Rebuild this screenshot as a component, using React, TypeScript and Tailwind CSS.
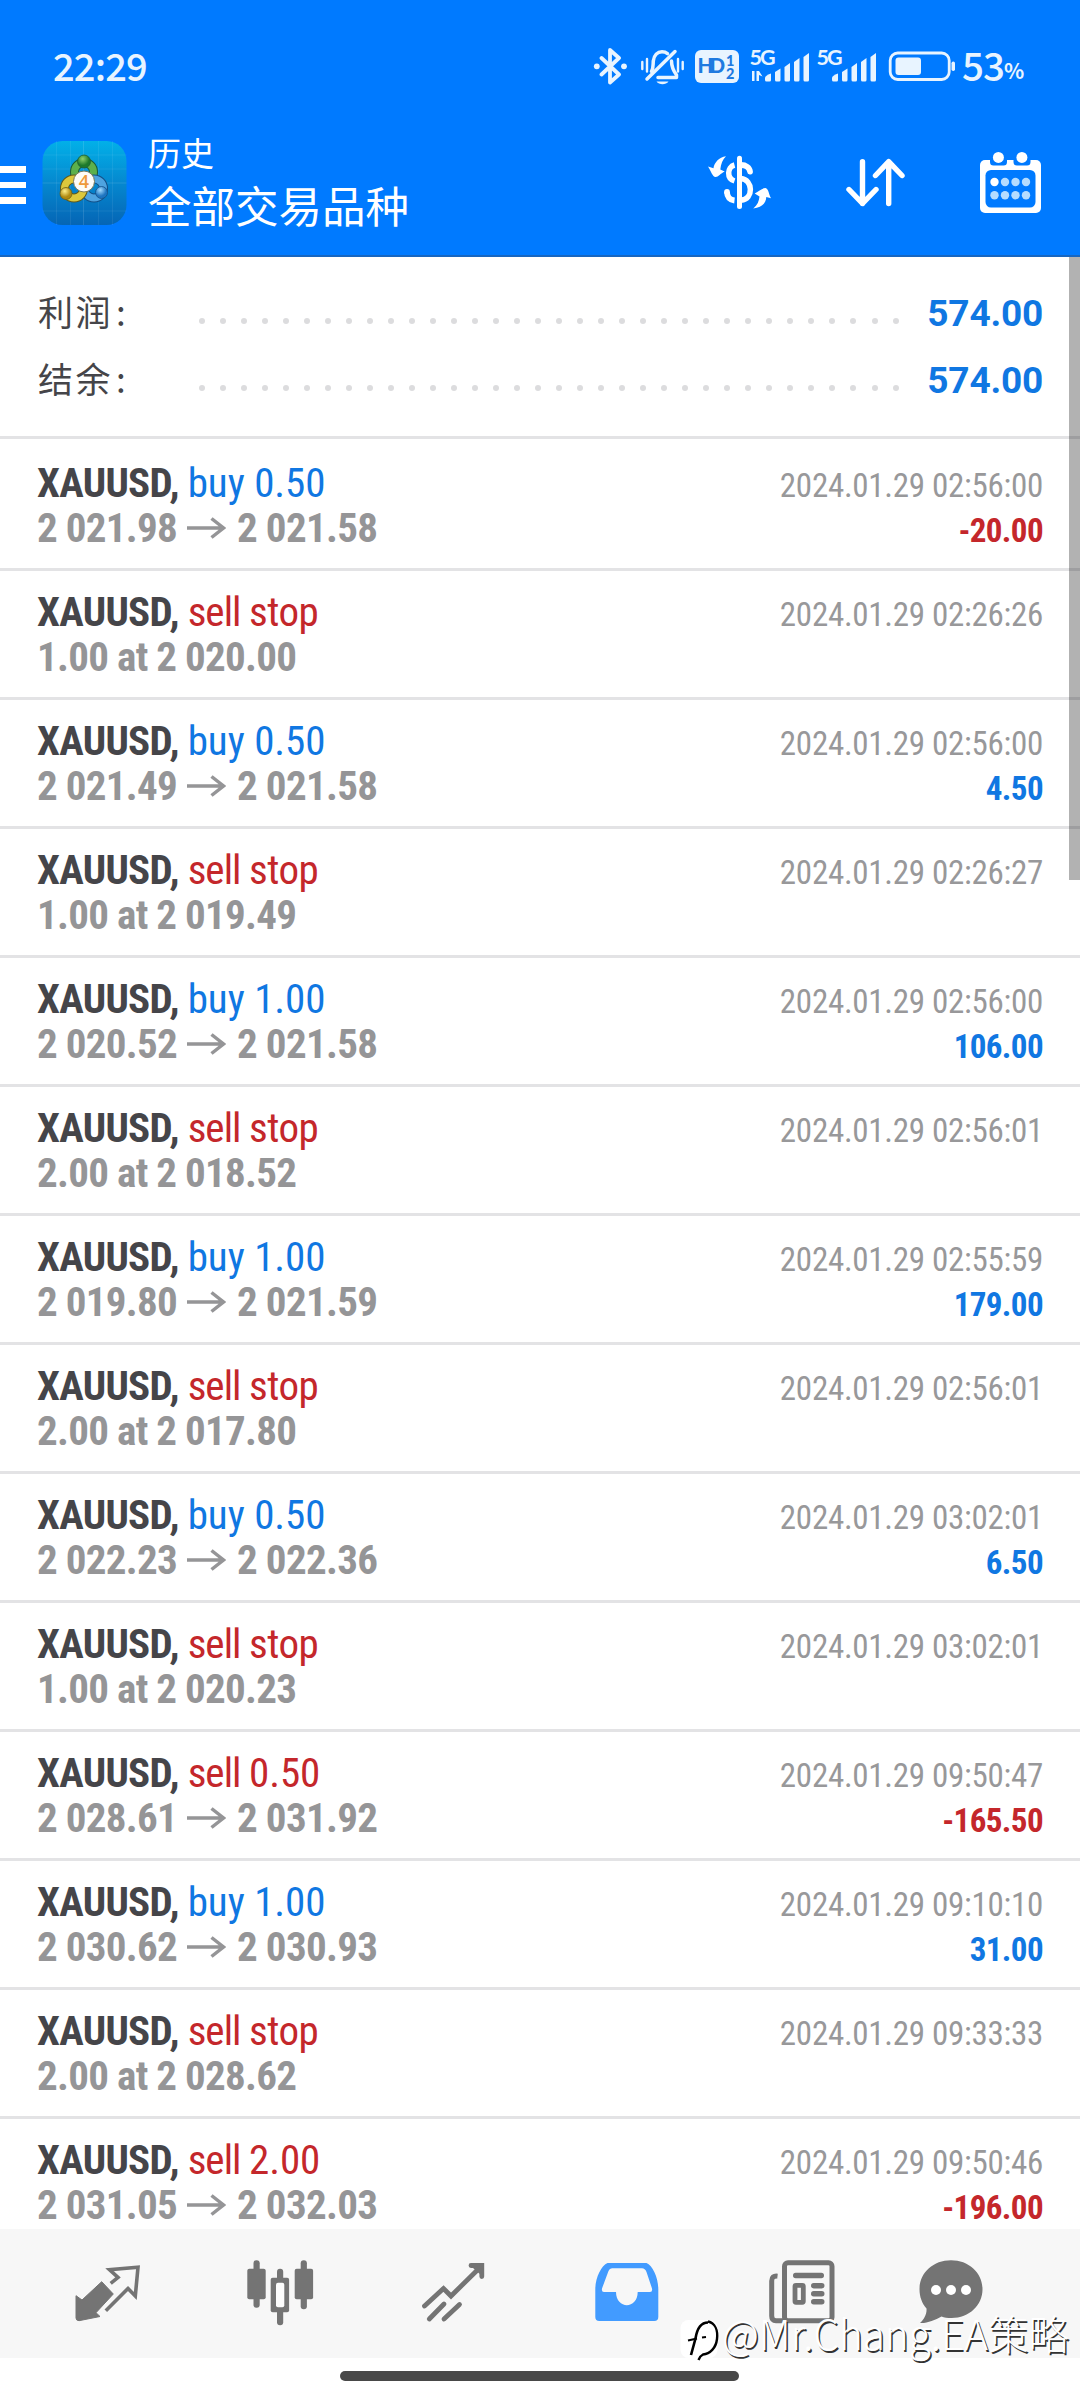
import type { ReactNode } from "react";
import { clsx } from "clsx";

interface Deal {
  side: "buy" | "sell";
  volume: string;
  detail: string;
  closePrice?: string;
  time: string;
  profit?: string;
}

const deals: Deal[] = [
  { side: "buy", volume: "0.50", detail: "2 021.98", closePrice: "2 021.58", time: "2024.01.29 02:56:00", profit: "-20.00" },
  { side: "sell", volume: "stop", detail: "1.00 at 2 020.00", time: "2024.01.29 02:26:26" },
  { side: "buy", volume: "0.50", detail: "2 021.49", closePrice: "2 021.58", time: "2024.01.29 02:56:00", profit: "4.50" },
  { side: "sell", volume: "stop", detail: "1.00 at 2 019.49", time: "2024.01.29 02:26:27" },
  { side: "buy", volume: "1.00", detail: "2 020.52", closePrice: "2 021.58", time: "2024.01.29 02:56:00", profit: "106.00" },
  { side: "sell", volume: "stop", detail: "2.00 at 2 018.52", time: "2024.01.29 02:56:01" },
  { side: "buy", volume: "1.00", detail: "2 019.80", closePrice: "2 021.59", time: "2024.01.29 02:55:59", profit: "179.00" },
  { side: "sell", volume: "stop", detail: "2.00 at 2 017.80", time: "2024.01.29 02:56:01" },
  { side: "buy", volume: "0.50", detail: "2 022.23", closePrice: "2 022.36", time: "2024.01.29 03:02:01", profit: "6.50" },
  { side: "sell", volume: "stop", detail: "1.00 at 2 020.23", time: "2024.01.29 03:02:01" },
  { side: "sell", volume: "0.50", detail: "2 028.61", closePrice: "2 031.92", time: "2024.01.29 09:50:47", profit: "-165.50" },
  { side: "buy", volume: "1.00", detail: "2 030.62", closePrice: "2 030.93", time: "2024.01.29 09:10:10", profit: "31.00" },
  { side: "sell", volume: "stop", detail: "2.00 at 2 028.62", time: "2024.01.29 09:33:33" },
  { side: "sell", volume: "2.00", detail: "2 031.05", closePrice: "2 032.03", time: "2024.01.29 09:50:46", profit: "-196.00" },
];

const summary = [
  { label: "利润", value: "574.00" },
  { label: "结余", value: "574.00" },
];

/* ---------- status bar ---------- */

function BluetoothIcon() {
  return (
    <svg className="h-[38px] w-[38px]" viewBox="0 0 38 38" fill="none" stroke="currentColor" strokeWidth="3.8" strokeLinecap="round" strokeLinejoin="round">
      <path d="M9.5 11 L27 27.5 L18 35.5 V3 L27 11 L9.5 27.5" />
      <circle cx="4.8" cy="19.3" r="2.9" fill="currentColor" stroke="none" />
      <circle cx="32" cy="19.3" r="2.9" fill="currentColor" stroke="none" />
    </svg>
  );
}

function MutedBellIcon() {
  return (
    <svg className="ml-[10px] h-[38px] w-[45px]" viewBox="0 0 45 38" fill="none" stroke="currentColor" strokeWidth="3.5" strokeLinecap="round" strokeLinejoin="round">
      <path d="M11.5 24.5 C13.5 21 13 18 13.3 14 C14 8 17.5 4.8 22 4.8 C24 4.8 26 5.4 27.5 6.6" />
      <path d="M31.5 14 C31.5 19.5 32.5 22.5 36.5 28 V30.5 H18" />
      <path d="M7 32 L35 4.5" />
      <path d="M16.5 34.5 H28.5 C26 38 19 38 16.5 34.5 Z" fill="currentColor" stroke="none" />
      <path d="M2.3 15 V22 M7 12 V24.5 M38 12 V24.5 M42.7 15 V22" strokeWidth="2.4" />
    </svg>
  );
}

function HdIcon() {
  return (
    <svg className="ml-[10px] h-[33px] w-[44px] font-['Lato',sans-serif] font-black" viewBox="0 0 44 33">
      <rect width="44" height="33" rx="6" fill="currentColor" />
      <text x="2.5" y="23.4" fontSize="20.5" textLength="27.5" fill="#1f7ae0">HD</text>
      <text x="31" y="15.5" fontSize="14.5" fill="#1f7ae0">1</text>
      <text x="31" y="29" fontSize="14.5" fill="#1f7ae0">2</text>
    </svg>
  );
}

function SignalIcon({ className, data }: { className: string; data?: boolean }) {
  return (
    <svg className={clsx("h-[38px] w-[63px] overflow-visible font-['Lato',sans-serif] font-bold", className)} viewBox="0 0 63 38" fill="currentColor">
      <text x="2.5" y="18.3" fontSize="21.5" textLength="26">5G</text>
      {data && (
        <path d="M1 27.5 L5 24 V34 H7.5 V24 H5 Z M9.5 24 V34 H12 V28 L15.5 29.5 L12 24 Z" />
      )}
      <path d="M18 31 q0 -2.5 6 -4.5 V33 q0 1.5 -1.5 1.5 H19.5 q-1.5 0 -1.5 -1.5 Z" />
      <path d="M28 25 L33.5 21.5 V33 q0 1.5 -1.5 1.5 H29.5 q-1.5 0 -1.5 -1.5 Z" />
      <path d="M37.5 20 L43 16 V33 q0 1.5 -1.5 1.5 H39 q-1.5 0 -1.5 -1.5 Z" />
      <path d="M47 15 L52.5 11 V33 q0 1.5 -1.5 1.5 H48.5 q-1.5 0 -1.5 -1.5 Z" />
      <path d="M56.5 10 L62 6 V33 q0 1.5 -1.5 1.5 H58 q-1.5 0 -1.5 -1.5 Z" />
    </svg>
  );
}

function BatteryIcon() {
  return (
    <svg className="ml-[11px] h-[30px] w-[68px]" viewBox="0 0 68 30" fill="currentColor">
      <rect x="2.2" y="2" width="59" height="26.5" rx="7.5" fill="none" stroke="currentColor" strokeWidth="2.8" />
      <rect x="7.5" y="6.5" width="25.5" height="17.5" rx="3" />
      <rect x="63.5" y="10.5" width="3.5" height="9.5" rx="1.7" />
    </svg>
  );
}

function StatusBar() {
  return (
    <div className="flex h-[104px] items-center pt-[28px] pr-[57px] pl-[53px] text-[#e8f4ff] font-['Noto_Sans_CJK_SC',sans-serif]">
      <span className="-mt-[3px] text-[38px] leading-none font-medium tracking-[-0.8px]">22:29</span>
      <div className="ml-auto flex items-center">
        <BluetoothIcon />
        <MutedBellIcon />
        <HdIcon />
        <SignalIcon className="ml-[8px]" data />
        <SignalIcon className="ml-[4px]" />
        <BatteryIcon />
        <span className="-mt-[4px] ml-[6px] text-[38.5px] leading-none font-medium tracking-[-1px]">53</span>
        <span className="mt-[8px] w-[19px] text-[21px] leading-none font-bold">%</span>
      </div>
    </div>
  );
}

/* ---------- title bar ---------- */

function AppLogo() {
  return (
    <svg className="ml-[16px] h-[84px] w-[85px]" viewBox="0 0 84 84">
      <defs>
        <linearGradient id="logo-bg" x1="0" y1="0" x2="0" y2="1">
          <stop offset="0" stopColor="#02b0e8" />
          <stop offset="0.5" stopColor="#0588cf" />
          <stop offset="1" stopColor="#0565b5" />
        </linearGradient>
        <radialGradient id="logo-green" cx="0.4" cy="0.3">
          <stop offset="0" stopColor="#8fd06a" />
          <stop offset="1" stopColor="#1d7a2c" />
        </radialGradient>
        <radialGradient id="logo-yellow" cx="0.4" cy="0.3">
          <stop offset="0" stopColor="#fff08a" />
          <stop offset="1" stopColor="#b08a10" />
        </radialGradient>
        <radialGradient id="logo-blue" cx="0.4" cy="0.3">
          <stop offset="0" stopColor="#a5dcff" />
          <stop offset="1" stopColor="#1d74c0" />
        </radialGradient>
      </defs>
      <rect width="84" height="84" rx="20" fill="url(#logo-bg)" />
      <path d="M14 0 V84 M28 0 V84 M56 0 V84 M70 0 V84 M0 14 H84 M0 28 H84 M0 70 H84" stroke="#fff" strokeOpacity="0.07" />
      <path d="M41 0 V84 M0 42 H84" stroke="#fff" strokeOpacity="0.12" />
      <g fill="none">
        <circle cx="41.5" cy="31" r="9.5" stroke="#1c5c33" strokeWidth="9" />
        <circle cx="41.5" cy="31" r="9.5" stroke="#5cb04c" strokeWidth="7" />
        <circle cx="51.5" cy="47.5" r="9.5" stroke="#134f86" strokeWidth="9" />
        <circle cx="51.5" cy="47.5" r="9.5" stroke="#4ea3e0" strokeWidth="7" />
        <circle cx="31.5" cy="47.5" r="9.5" stroke="#5f5a1c" strokeWidth="9" />
        <circle cx="31.5" cy="47.5" r="9.5" stroke="#dcc83c" strokeWidth="7" />
      </g>
      <circle cx="41.5" cy="20.5" r="6.5" fill="url(#logo-green)" stroke="#1c5c33" strokeWidth="0.8" />
      <circle cx="23.5" cy="52.5" r="6" fill="url(#logo-yellow)" stroke="#6f5f14" strokeWidth="0.8" />
      <circle cx="59" cy="51.5" r="6" fill="url(#logo-blue)" stroke="#134f86" strokeWidth="0.8" />
      <circle cx="41.5" cy="40.5" r="10.5" fill="#fdfcf8" stroke="#7a7a5a" strokeWidth="1" />
      <text x="41.5" y="47" textAnchor="middle" fontSize="18" fill="#ee9a3c" className="font-['Open_Sans',sans-serif] font-semibold">4</text>
    </svg>
  );
}

function CurrencyIcon() {
  return (
    <svg className="h-[56px] w-[66px]" viewBox="0 0 66 56" fill="none" stroke="currentColor" strokeWidth="5.5">
      <path d="M33.5 3.3 V51.5" strokeWidth="5" strokeLinecap="round" />
      <path d="M28.5 10 C21 12 20.5 23.5 28.5 26" />
      <path d="M35 10 C40 10 43.5 12.5 44 16.5" strokeLinecap="round" strokeWidth="5.8" />
      <path d="M35 23.5 C47 24.5 48 44 35 45.3" />
      <path d="M21 37 C21 42 24 45 28.5 45.5" strokeWidth="5.8" />
      <circle cx="21" cy="37" r="2.9" fill="currentColor" stroke="none" />
      <path d="M20 1.2 C16.5 4.5 15 9 14.3 14.5 L18.7 16.5 C14.5 18.5 12 22.3 9.5 22 C6.5 22 5 16 2 11.5 L7.5 13.2 C8 8 13 2 20 1.2 Z" fill="currentColor" stroke="none" />
      <path d="M47.3 53.5 C51.5 50 53 46 53.5 41.5 L48.7 38.5 C53 36.5 56 33 59.5 33 C62.5 33.5 62.5 38.5 65 43.3 L60.3 42 C60 48 56 52.5 47.3 53.5 Z" fill="currentColor" stroke="none" />
    </svg>
  );
}

function SortIcon() {
  return (
    <svg className="ml-[74px] h-[52px] w-[60px]" viewBox="0 0 60 52" fill="none" stroke="currentColor" strokeWidth="5.4" strokeLinecap="round" strokeLinejoin="round">
      <path d="M16.5 4.7 V46.5 M3 32.5 L16.5 46.5 L30 32.5" />
      <path d="M42.7 46.5 V4.7 M29.5 18.5 L42.7 4.7 L56 18.5" />
    </svg>
  );
}

function CalendarIcon() {
  return (
    <svg className="ml-[73px] h-[64px] w-[63px]" viewBox="0 0 63 64">
      <rect x="1" y="9" width="61" height="53" rx="5" fill="#fff" />
      <path d="M11 8 H28 V11 q0 3.5 -3.5 3.5 H14.5 q-3.5 0 -3.5 -3.5 Z M34.5 8 H51.5 V11 q0 3.5 -3.5 3.5 H38 q-3.5 0 -3.5 -3.5 Z" fill="#007aff" />
      <circle cx="19.4" cy="6.4" r="5.5" fill="#fff" />
      <circle cx="42.9" cy="6.4" r="5.5" fill="#fff" />
      <rect x="6.5" y="19" width="50" height="37.5" rx="5.5" fill="#007aff" />
      {[31, 44.2].map((y, row) =>
        [15.5, 26, 36.5, 47].map((x, col) => (
          <circle key={`${x}-${y}`} cx={x} cy={y} r="4.2" fill={row === 0 && col === 0 ? "#fff" : "#b5dcff"} />
        ))
      )}
    </svg>
  );
}

function TitleBar() {
  return (
    <div className="flex h-[153px] items-start border-b-2 border-[#1766c0] text-white">
      <div className="mt-[62px] flex w-[26px] flex-col gap-[9px]">
        <span className="h-[6.5px] bg-white" />
        <span className="h-[6.5px] bg-white" />
        <span className="h-[6.5px] bg-white" />
      </div>
      <div className="mt-[37px]">
        <AppLogo />
      </div>
      <div className="ml-[21px] font-['Noto_Sans_CJK_SC',sans-serif]">
        <div className="mt-[28px] text-[33px] leading-[40px]">历史</div>
        <div className="mt-[7px] text-[43.5px] leading-[52px]">全部交易品种</div>
      </div>
      <div className="mt-[47px] mr-[38px] ml-auto flex h-[64px] items-center">
        <CurrencyIcon />
        <SortIcon />
        <CalendarIcon />
      </div>
    </div>
  );
}

/* ---------- history list ---------- */

function SummaryRow({ label, value }: { label: string; value: string }) {
  return (
    <div className="flex h-[67px] items-baseline leading-[61px]">
      <span className="w-[161px] text-[35px] tracking-[2.5px] text-[#454549] font-['Noto_Sans_CJK_SC',sans-serif]">
        {label}<span className="ml-[3px]">:</span>
      </span>
      <span className="flex w-[700px] justify-between self-start pt-[38px]">
        {Array.from({ length: 34 }, (_, i) => (
          <span key={i} className="size-[6px] rounded-full bg-[#dcdcde]" />
        ))}
      </span>
      <span className="ml-auto text-[37px] font-bold tracking-[-0.2px] text-[#1077e2]">{value}</span>
    </div>
  );
}

function PriceArrow() {
  return (
    <svg className="mr-[11px] ml-[10px] h-[22px] w-[39px] shrink-0 -translate-y-[1px]" viewBox="0 0 39 22" fill="none" stroke="currentColor" strokeWidth="3.5">
      <path d="M0 11 H36 M24.5 1.5 L36.5 11 L24.5 20.5" />
    </svg>
  );
}

function DealRow({ deal }: { deal: Deal }) {
  const loss = deal.profit?.startsWith("-");
  const isSell = deal.side === "sell";

  return (
    <div className="h-[129px] border-b-[3px] border-[#e3e3e5] pt-[19px] pr-[37px] pl-[37px]">
      <div className="flex h-[45px] items-baseline justify-between leading-[45px]">
        <span className="text-[41px] whitespace-pre">
          <span className="font-bold tracking-[-0.7px] text-[#454549]">XAUUSD, </span>
          <span className={isSell ? "text-[#c4272b]" : "text-[#1077e2]"}>
            <span className={clsx(isSell && "tracking-[-0.95px]")}>{deal.side} </span>
            <span className={clsx(deal.volume === "stop" ? "tracking-[-0.5px]" : "tracking-[-0.1px]")}>{deal.volume}</span>
          </span>
        </span>
        <span className="text-[33px] tracking-[-0.28px] text-[#98989a]">{deal.time}</span>
      </div>
      <div className="flex h-[45px] items-baseline justify-between leading-[45px] font-bold">
        <span className="flex items-center text-[41px] tracking-[-0.7px] text-[#959597]">
          <span>{deal.detail}</span>
          {deal.closePrice && (
            <>
              <PriceArrow />
              <span>{deal.closePrice}</span>
            </>
          )}
        </span>
        {deal.profit && (
          <span className={clsx("text-[33px] tracking-[-0.6px]", loss ? "text-[#c4272b]" : "text-[#1077e2]")}>
            {deal.profit}
          </span>
        )}
      </div>
    </div>
  );
}

/* ---------- bottom navigation ---------- */

function NavItem({ className, width, children }: { className?: string; width: number; children: ReactNode }) {
  return (
    <svg className={clsx("shrink-0", className)} width={width} height={67} viewBox={`0 0 ${width} 67`} fill="none">
      {children}
    </svg>
  );
}

function BottomNav() {
  return (
    <nav className="flex h-[129px] bg-[#f7f7f7] pt-[30px] pl-[75px] text-[#747474]">
      <NavItem width={66}>
        <path d="M26.7 22.7 L38.3 35 L21 53.7 L25 57.5 L4 61.7 Q1 61.5 1 59 V36.7 L7 41 Z" fill="currentColor" stroke="currentColor" strokeWidth="1" strokeLinejoin="round" />
        <path d="M35.7 24.3 L43 18.5 L34.5 10.7 L63 8.3 L60.3 37 L53 29.5 L30.8 51.7" stroke="currentColor" strokeWidth="3.6" />
      </NavItem>
      <NavItem width={68} className="ml-[105px]">
        <g fill="currentColor">
          <rect x="7.5" y="1.3" width="6.2" height="47.5" rx="3" />
          <rect x="1.3" y="9.7" width="18.4" height="30.5" rx="2" />
          <rect x="54.7" y="1.3" width="6.2" height="49" rx="3" />
          <rect x="48.7" y="9.7" width="18.4" height="30.5" rx="2" />
          <rect x="31" y="9.7" width="6.2" height="56.5" rx="3" />
          <rect x="24.7" y="18.7" width="18.4" height="34.5" rx="2" />
        </g>
        <rect x="30" y="23.7" width="8.3" height="24.5" rx="2" fill="#fcfcfc" />
      </NavItem>
      <NavItem width={65} className="ml-[107px]">
        <g stroke="currentColor" strokeWidth="4.8" strokeLinecap="round">
          <path d="M3.5 47 L22.5 29.5 L30 37 L59.5 8" />
          <path d="M50 6.5 H60.8 V17.5" />
          <path d="M8.3 60 L23 45 M23 60 L38.5 45.5" />
        </g>
        <path d="M52 9 L60 6 V16 Z" fill="currentColor" />
      </NavItem>
      <NavItem width={65} className="ml-[109px]">
        <path
          d="M12.5 4 H51.5 C57.5 6 63.3 19 63.3 30 V58 Q63.3 62 59.3 62 H4.3 Q0.3 62 0.3 58 V30 C0.3 19 6.5 6 12.5 4 Z M17 9.3 Q14.5 9.3 13.5 12 L7 29.5 Q6.3 33 9 33 H21 C21 50.5 42.7 50.5 42.7 33 H55 Q57.7 33 57 29.5 L51.5 13 Q50 9.3 47 9.3 Z"
          fill="#429bff"
          fillRule="evenodd"
        />
      </NavItem>
      <NavItem width={67} className="ml-[109px]">
        <rect x="15.5" y="3.8" width="47.5" height="58" rx="3.5" stroke="currentColor" strokeWidth="5" />
        <path d="M8.5 17.2 Q2.7 16.5 2.7 22 V57 Q2.7 61.7 7 61.7 H16" stroke="currentColor" strokeWidth="5" />
        <g fill="currentColor">
          <rect x="24" y="13.8" width="31" height="5.4" rx="2.7" />
          <rect x="42" y="24" width="13.5" height="5.4" rx="2.7" />
          <rect x="42" y="32" width="13.5" height="5.4" rx="2.7" />
          <rect x="42" y="40" width="13.5" height="5.4" rx="2.7" />
        </g>
        <rect x="26" y="26.3" width="8.3" height="17" rx="1" stroke="currentColor" strokeWidth="4.8" />
      </NavItem>
      <NavItem width={65} className="ml-[83px]">
        <path d="M32 1.3 C50 1.3 63.5 14 63.5 30.3 C63.5 46.5 50 59.3 32 59 C29 59 25 58.5 22.5 57.5 C16 61 8 64.5 1 64 C5 60.5 8 55 7.5 49.5 C3 44.5 0.5 38 0.5 30.3 C0.5 14 14 1.3 32 1.3 Z" fill="currentColor" />
        <g fill="#fff">
          <circle cx="17" cy="31" r="5" />
          <circle cx="32" cy="31" r="5" />
          <circle cx="47" cy="31" r="5" />
        </g>
      </NavItem>
    </nav>
  );
}

function Watermark() {
  return (
    <div className="absolute top-[2304px] left-[680px] flex items-center">
      <svg className="mt-[14px] h-[44px] w-[42px]" viewBox="0 0 42 44" fill="none" stroke="#000">
        <rect x="0.5" y="2" width="37" height="38" rx="8" fill="#fff" stroke="none" />
        <path d="M28 3.5 C35 5 38 12 37 21 C36 30 30 36 23 36.5 Q20 38 18.5 42" strokeWidth="2.4" />
        <path d="M11 37 L15.5 20.5 C17 11 20 4.5 28 4.5" strokeWidth="2.6" />
        <path d="M8 22.5 L17 20.5 M22 19.5 L26 19" strokeWidth="2" />
      </svg>
      <span className="text-[40.5px] leading-[44px] font-light whitespace-nowrap text-white font-['Noto_Sans_CJK_SC',sans-serif] [text-shadow:1.5px_1.5px_0.5px_#333]">
        @Mr.Chang.EA策略
      </span>
    </div>
  );
}

export default function App() {
  return (
    <div className="relative h-[2400px] w-[1080px] overflow-hidden bg-white font-['Roboto',sans-serif]">
      <header className="bg-[#007aff]">
        <StatusBar />
        <TitleBar />
      </header>

      <main className="relative h-[1972px] overflow-hidden">
        <section className="h-[182px] border-b-[3px] border-[#e3e3e5] pt-[23px] pr-[37px] pl-[38px]">
          {summary.map((s) => (
            <SummaryRow key={s.label} {...s} />
          ))}
        </section>
        <section className="pt-[3px] font-['Roboto_Condensed',sans-serif]">
          {deals.map((deal, i) => (
            <DealRow key={i} deal={deal} />
          ))}
        </section>
        <div className="absolute top-0 right-0 h-[623px] w-[11px] bg-black/30" />
      </main>

      <BottomNav />
      <div className="flex justify-center pt-[13px] pr-[2px]">
        <span className="h-[10px] w-[399px] rounded-full bg-[#484848]" />
      </div>
      <Watermark />
    </div>
  );
}
